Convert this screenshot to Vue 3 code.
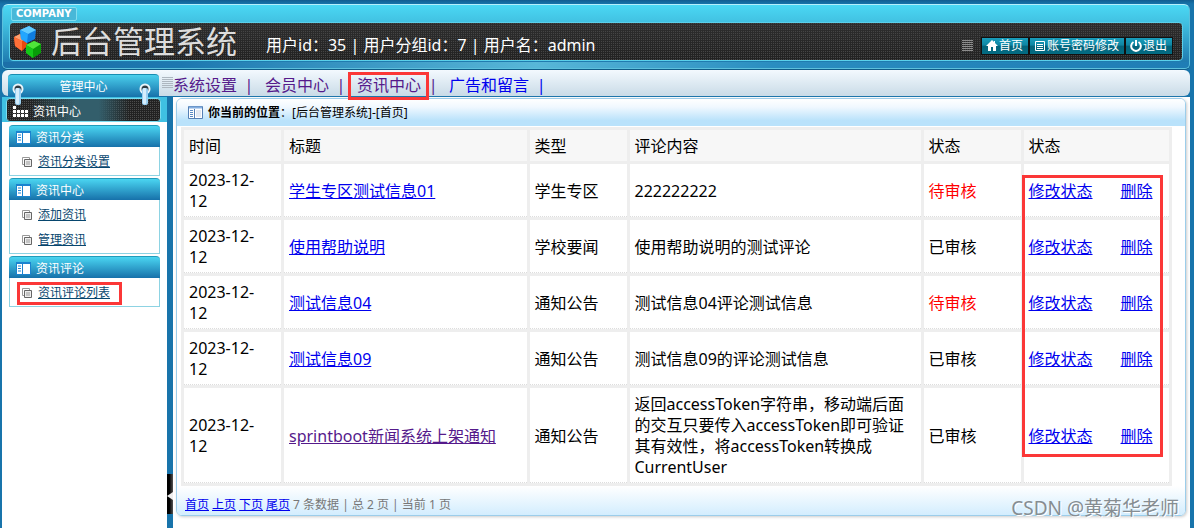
<script setup>
const topLinks = [
  { label: '系统设置', visited: true },
  { label: '会员中心', visited: true },
  { label: '资讯中心', visited: true, marked: true },
  { label: '广告和留言' },
]

const groups = [
  { title: '资讯分类', items: [{ label: '资讯分类设置' }] },
  { title: '资讯中心', items: [{ label: '添加资讯' }, { label: '管理资讯' }] },
  { title: '资讯评论', items: [{ label: '资讯评论列表', marked: true }] },
]

const columns = ['时间', '标题', '类型', '评论内容', '状态', '状态']

const rows = [
  { title: '学生专区测试信息01', type: '学生专区', comment: '222222222', pending: true },
  { title: '使用帮助说明', type: '学校要闻', comment: '使用帮助说明的测试评论' },
  { title: '测试信息04', type: '通知公告', comment: '测试信息04评论测试信息', pending: true },
  { title: '测试信息09', type: '通知公告', comment: '测试信息09的评论测试信息' },
  {
    title: 'sprintboot新闻系统上架通知',
    type: '通知公告',
    comment: '返回accessToken字符串，移动端后面的交互只要传入accessToken即可验证其有效性，将accessToken转换成CurrentUser',
    visited: true,
  },
]

const pages = ['首页', '上页', '下页', '尾页']
</script>

<template>
  <div class="page">
    <header class="banner">
      <div class="company"><span>COMPANY</span></div>
      <div class="bar">
        <svg class="logo" width="30" height="34" viewBox="0 0 30 34">
          <path d="m0 12 6-3 7 3v9l-5 5-7-5z" fill="#e8480f" />
          <path d="m0 12 6-3 7 3-5 4z" fill="#ffa070" />
          <path d="m0 12 8 4v10l-7-5z" fill="#ff7038" />
          <path d="m6 5 9-4 7 4-1 9-8 4-6-4z" fill="#0f7de0" />
          <path d="m6 5 9-4 7 4-8 4z" fill="#62cbff" />
          <path d="m6 5 8 4-1 9-6-4z" fill="#22a6ff" />
          <path d="m12 20 8-4 7 3v9l-8 5-7-5z" fill="#089c08" />
          <path d="m12 20 8-4 7 3-8 5z" fill="#4fe53a" />
          <path d="m12 20 7 4v9l-7-5z" fill="#14c818" />
        </svg>
        <h1>后台管理系统</h1>
        <p class="user">用户id：35 | 用户分组id：7 | 用户名：admin</p>
        <div class="tools">
          <i class="grip grey"></i>
          <button type="button">
            <svg width="12" height="12" viewBox="0 0 12 12"><path d="M6 0 0 6h2v5h3V7h2v4h3V6h2L9 3V1H8v1z" fill="#fff" /></svg>
            首页
          </button>
          <button type="button">
            <svg width="12" height="12" viewBox="0 0 12 12"><path d="M1.500 1.500h9v9h-9zM3 4.500h6M3 6.500h6M3 8.500h6" fill="none" stroke="#fff" /></svg>
            账号密码修改
          </button>
          <button type="button">
            <svg width="12" height="12" viewBox="0 0 12 12"><path d="M3.500 2a4.800 4.800 0 1 0 5 0M6 0v6" fill="none" stroke="#fff" stroke-width="2" /></svg>
            退出
          </button>
        </div>
      </div>
    </header>

    <nav class="menu">
      <div class="tab">
        管理中心
        <svg v-for="side in ['left', 'right']" :key="side" class="ring" :class="side" width="12" height="24" viewBox="0 0 12 24">
          <circle cx="6" cy="7" r="4.500" fill="#303b42" stroke="#e8f4fa" stroke-width="2" />
          <rect x="3" y="6" width="6" height="17" rx="2" fill="#9bd0f2" />
          <rect x="4" y="6" width="3" height="16" rx="1" fill="#d6edfc" />
        </svg>
      </div>
      <i class="grip"></i>
      <span v-for="link in topLinks" :key="link.label" class="entry" :class="{ visited: link.visited }">
        <a href="#">{{ link.label }}<i v-if="link.marked" class="mark"></i></a>
        <span class="sep">|</span>
      </span>
    </nav>

    <div class="body">
      <aside class="side">
        <div class="side-head">
          <div class="side-title">
            <svg width="16" height="12" viewBox="0 0 16 12" fill="#fff">
              <path d="M0 1h3v3H0zM0 5h3v3H0zM0 9h3v3H0zM4 5h3v3H4zM4 9h3v3H4zM8 5h3v3H8zM8 9h3v3H8zM12 5h3v3h-3zM12 9h3v3h-3z" />
            </svg>
            资讯中心
          </div>
        </div>
        <section v-for="group in groups" :key="group.title" class="group">
          <h2>
            <svg width="15" height="13" viewBox="0 0 15 13">
              <path d="M0 0h15v13H0z" fill="#1b83cf" />
              <path d="M1 2h5v10H1zM7 2h7v10H7z" fill="#fff" />
              <path d="M2 4h3M2 6.500h3M2 9h3" stroke="#1b83cf" />
            </svg>
            {{ group.title }}
          </h2>
          <ul>
            <li v-for="item in group.items" :key="item.label">
              <svg width="10" height="10" viewBox="0 0 10 10">
                <path d="M.5.5h7v7h-7z" fill="#fff" stroke="#999" />
                <path d="M2.500 2.500h7v7h-7z" fill="#eee" stroke="#666" />
                <path d="M4 5h4M4 7h4" stroke="#999" />
              </svg>
              <a href="#">{{ item.label }}</a>
              <i v-if="item.marked" class="mark"></i>
            </li>
          </ul>
        </section>
      </aside>

      <div class="split">
        <button type="button" aria-label="收起">
          <svg width="6" height="8" viewBox="0 0 6 8"><path d="m0 4 6-4v8z" fill="#eee" /></svg>
        </button>
      </div>

      <main class="content">
        <div class="panel">
          <div class="crumb">
            <svg width="15" height="13" viewBox="0 0 15 13">
              <path d="M.5.5h14v12H.5z" fill="#fff" stroke="#5580b5" />
              <path d="M1 1.500h13" stroke="#83aee0" stroke-width="2" />
              <path d="M6.500 3v9" stroke="#5580b5" />
              <path d="M2 4.500h3M2 6.500h3M2 8.500h3M2 10.500h3" stroke="#5a8bc4" />
              <path d="M8 4h5v7H8z" fill="#e2e9f3" />
            </svg>
            <b>你当前的位置</b>：[后台管理系统]-[首页]
          </div>
          <div class="sheet">
            <table>
              <colgroup>
                <col class="w10" /><col class="w25" /><col class="w10" />
                <col class="w30" /><col class="w10" /><col class="w15" />
              </colgroup>
              <thead>
                <tr><th v-for="(name, i) in columns" :key="i" scope="col">{{ name }}</th></tr>
              </thead>
              <tbody>
                <tr v-for="row in rows" :key="row.title">
                  <td>2023-12-<br />12</td>
                  <td><a href="#" :class="{ visited: row.visited }">{{ row.title }}</a></td>
                  <td>{{ row.type }}</td>
                  <td>{{ row.comment }}</td>
                  <td :class="{ pending: row.pending }">{{ row.pending ? '待审核' : '已审核' }}</td>
                  <td><a href="#">修改状态</a><a href="#" class="delete">删除</a></td>
                </tr>
              </tbody>
            </table>
            <i class="mark"></i>
          </div>
          <footer class="pager">
            <a v-for="p in pages" :key="p" href="#">{{ p }}</a>
            <span>7 条数据 | 总 2 页 | 当前 1 页</span>
          </footer>
        </div>
        <div class="watermark">CSDN @黄菊华老师</div>
      </main>
    </div>
  </div>
</template>

<style>
body {
  background: #1874ab;
}
</style>

<style scoped>
* {
  box-sizing: border-box;
}
.page {
  min-height: 100vh;
  display: flex;
  flex-direction: column;
  padding: 4px 4px 0 2px;
  background: linear-gradient(#125d90, #1874ab 4px);
  font: 16px/21px "Noto Sans", "Noto Sans CJK SC", sans-serif;
  color: #000;
}
h1, h2, p, ul {
  margin: 0;
  padding: 0;
  font-weight: normal;
}
button {
  font: inherit;
  cursor: pointer;
}
svg {
  flex: none;
}
.mark {
  position: absolute;
  border: 3px solid #fb3737;
  pointer-events: none;
}

.banner {
  height: 65px;
  padding: 3px 6px 6px;
  border: 1px solid #5cc0dc;
  border-top-color: #b5effb;
  border-radius: 6px 6px 5px 5px;
  background:
    linear-gradient(90deg, #1c6fa8, #1d78b0 15%, #58b7d8 45%, #2a8dc0 65%, #1f7db5) bottom / 100% 6px no-repeat,
    linear-gradient(#4bd8f4, #40bfe0 30%, #1a70a8);
  box-shadow: 0 1px #125d88;
}
.company {
  display: flex;
}
.company span {
  padding: 0 4px;
  margin: -1px 2px 1px;
  border: 1px solid #83def0;
  border-radius: 2px;
  background: #48b8d8;
  color: #fff;
  font: bold 10px/12px "DejaVu Sans", sans-serif;
}
.bar {
  height: 39px;
  display: flex;
  align-items: center;
  padding: 0 9px 0 4px;
  border: 1px solid #5ad0ea;
  border-radius: 4px;
  background:
    conic-gradient(#454545 25%, transparent 0) 0 0 / 2px 2px,
    linear-gradient(#2e2e2e, #222);
}
.bar h1 {
  margin: -2px 0 0 7px;
  font-size: 31px;
  line-height: 36px;
  color: #ddd;
}
.user {
  margin: 7px auto 0 29px;
  color: #fff;
}
.tools {
  display: flex;
  align-items: center;
  margin-top: 8px;
}
.tools button {
  height: 18px;
  display: flex;
  align-items: center;
  gap: 1px;
  padding: 0 5px 0 4px;
  border: 1px solid #111;
  background: linear-gradient(#189cba, #0f86a3 45%, #04647b 50%, #046c83);
  color: #fff;
  font-size: 12px;
  line-height: 16px;
  white-space: nowrap;
}
.grip {
  width: 11px;
  height: 12px;
  background: repeating-linear-gradient(#adb7c0 0 1px, transparent 1px 2px);
}
.grip.grey {
  margin-right: 8px;
  background: repeating-linear-gradient(#8c8c8c 0 1px, transparent 1px 2px);
}

.menu {
  position: relative;
  z-index: 1;
  height: 26px;
  display: flex;
  align-items: center;
  margin-top: 1px;
  border-radius: 6px;
  background: linear-gradient(#f3f9fe, #c9dbe7);
}
.tab {
  position: relative;
  width: 151px;
  height: 22px;
  margin: 4px 3px 0 6px;
  border-top: 1px solid #178db2;
  border-radius: 4px 4px 0 0;
  background: linear-gradient(#4acfec, #1975ad);
  color: #fff;
  font-size: 12px;
  line-height: 24px;
  text-align: center;
}
.ring {
  position: absolute;
  top: 7px;
}
.ring.left {
  left: 4px;
}
.ring.right {
  right: 8px;
}
.entry {
  display: flex;
  margin-top: 4px;
  white-space: nowrap;
  color: #00e;
}
.entry.visited {
  color: #551a8b;
}
.entry a {
  position: relative;
  color: inherit;
  text-decoration: none;
}
.entry .sep {
  width: 28px;
  padding-right: 4px;
  text-align: center;
}
.entry .mark {
  inset: -3px -8px -4px -9px;
}

.body {
  flex: 1;
  display: flex;
  margin-top: 1px;
}
.side {
  width: 165px;
  background: #fff;
}
.side-head {
  padding: 1px 6px 0 4px;
  margin-bottom: 3px;
  background: #3fc0e2;
}
.side-title {
  height: 24px;
  display: flex;
  align-items: center;
  gap: 4px;
  padding: 2px 0 0 6px;
  border: 1px solid #7adcf0;
  border-radius: 4px;
  background:
    linear-gradient(90deg, transparent 15%, #335e6b 45%, #335e6b 60%, transparent 80%),
    conic-gradient(#4c4c4c 25%, transparent 0) 0 0 / 2px 2px,
    #222;
  color: #fff;
  font-size: 12px;
}
.group {
  margin: 0 7px 2px;
}
.group h2 {
  height: 22px;
  display: flex;
  align-items: center;
  gap: 5px;
  padding: 1px 0 0 7px;
  border-top: 1px solid #239bba;
  border-radius: 4px 4px 0 0;
  background: linear-gradient(#4ad5f1, #1771aa);
  color: #fff;
  font-size: 12px;
}
.group ul {
  list-style: none;
  padding: 2px 0 1px;
  border: 1px solid #8dd3e3;
  border-top: 0;
}
.group li {
  position: relative;
  height: 25px;
  display: flex;
  align-items: center;
  gap: 6px;
  padding-left: 12px;
  font-size: 12px;
}
.group a {
  color: #07466e;
}
.group .mark {
  left: 7px;
  top: 2px;
  width: 105px;
  height: 23px;
}

.split {
  width: 6px;
  display: flex;
  flex-direction: column;
  justify-content: flex-end;
  padding-bottom: 14px;
}
.split button {
  height: 40px;
  padding: 0;
  border: 0;
  background: linear-gradient(90deg, #000 40%, #555);
}

.content {
  position: relative;
  flex: 1;
  min-width: 0;
  padding: 1px 4px 12px 3px;
  background: #fff;
}
.panel {
  border: 1px solid #9ccdea;
  border-radius: 6px;
  box-shadow: 1px 1px 3px #ccc;
  overflow: hidden;
}
.crumb {
  height: 27px;
  display: flex;
  align-items: center;
  padding: 0 0 0 11px;
  margin-bottom: 1px;
  background: linear-gradient(#fff, #f0f8ff 30%, #b9e2fb 80%, #b9e2fb);
  font-size: 12px;
}
.crumb b {
  margin-left: 5px;
}
.sheet {
  position: relative;
  padding: 0 13px 0 4px;
}
.sheet .mark {
  top: 48px;
  right: 22px;
  bottom: 29px;
  width: 141px;
}
table {
  width: 100%;
  table-layout: fixed;
  border-spacing: 3px;
  background: #eee;
}
.w10 { width: 10%; }
.w15 { width: 15%; }
.w25 { width: 25%; }
.w30 { width: 30%; }
th, td {
  padding: 6px 5px 4px;
  text-align: left;
  font-weight: normal;
}
th {
  background: #f7f7f7;
}
td {
  border-bottom: 1px dotted #ddd;
  background: #fff;
}
td a, .pager a {
  color: #00e;
}
td a.visited {
  color: #551a8b;
}
.delete {
  margin-left: 28px;
}
.pending {
  color: #f00;
}
.pager {
  height: 29px;
  display: flex;
  align-items: center;
  gap: 3px;
  padding: 7px 0 0 8px;
  background: linear-gradient(#fff, #d3edfe);
  color: #777;
  font-size: 12px;
}
.watermark {
  position: absolute;
  right: 11px;
  bottom: 8px;
  color: #868d92;
  font-size: 19px;
  line-height: 24px;
  text-shadow: 1px 1px #fff;
}
</style>
